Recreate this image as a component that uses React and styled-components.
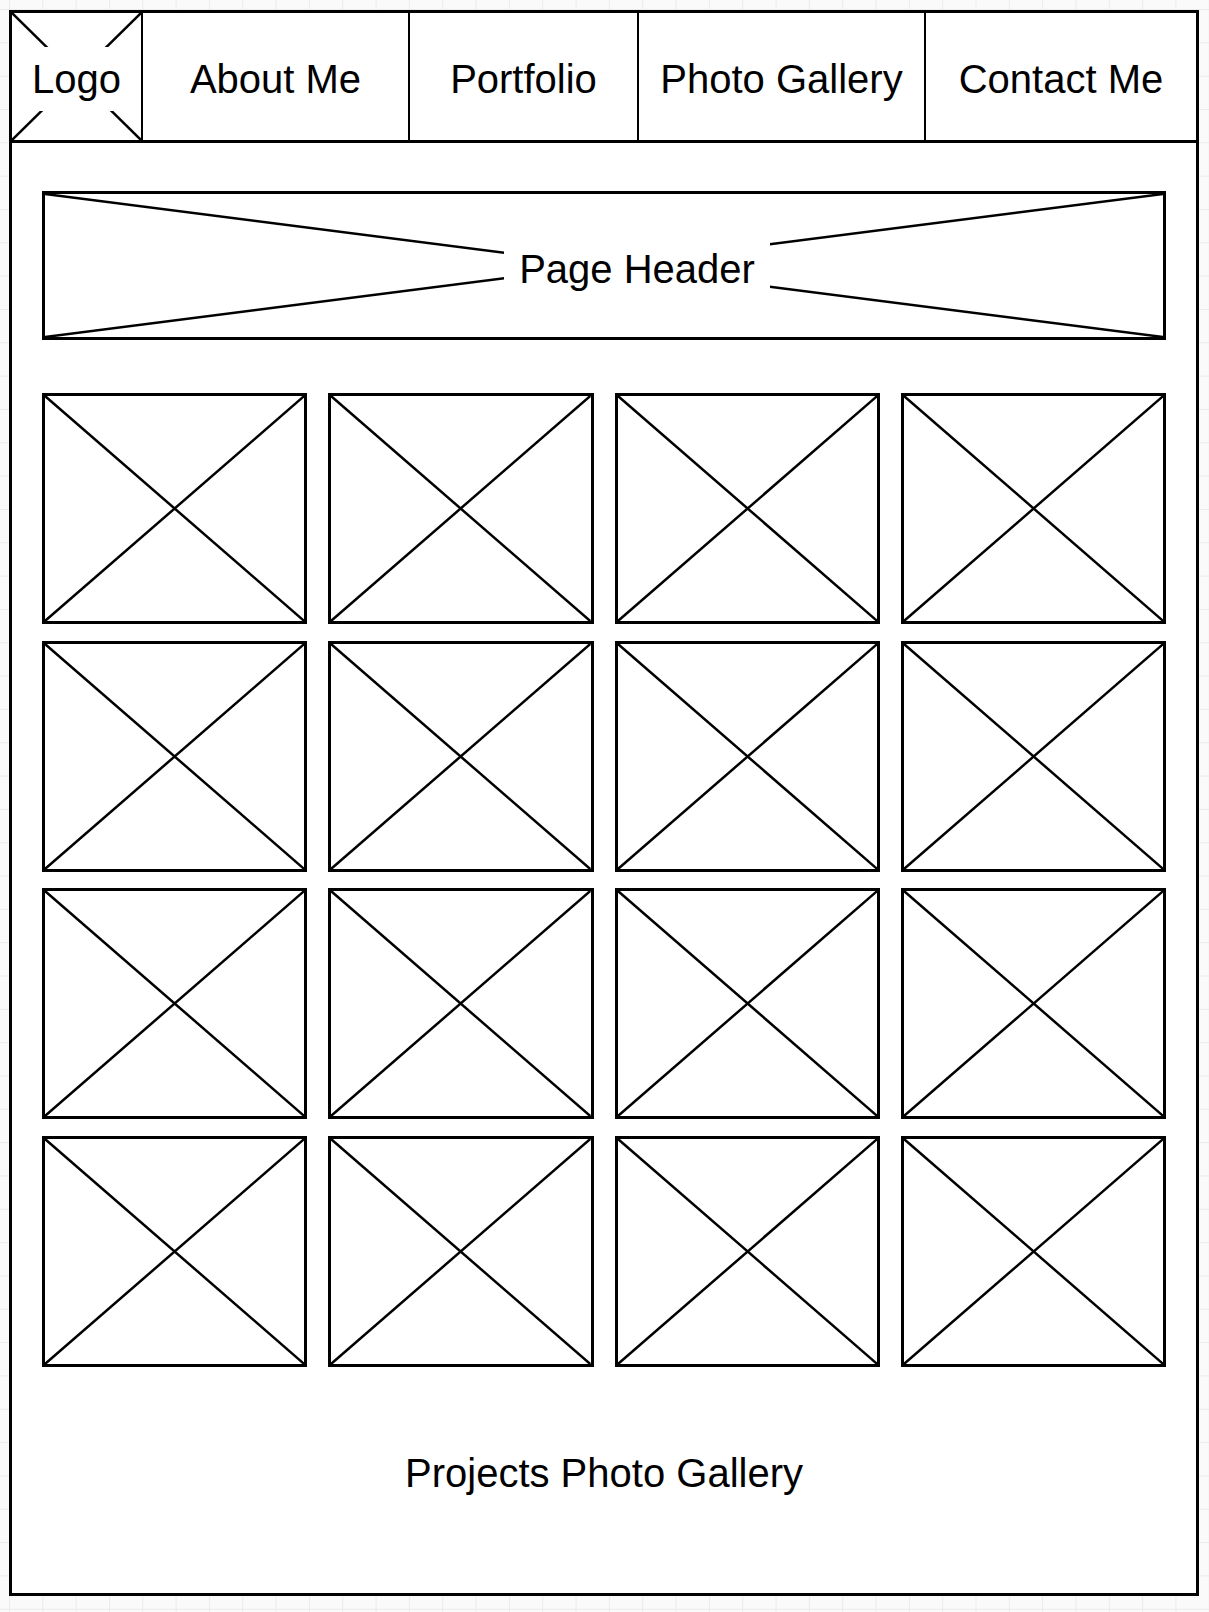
import React from "react";
import styled, { createGlobalStyle } from "styled-components";

const GlobalStyle = createGlobalStyle`
  html, body {
    margin: 0;
    padding: 0;
  }
  body {
    font-family: "Liberation Sans", Arial, Helvetica, sans-serif;
    color: #000;
    background-color: #fafafa;
    background-image:
      linear-gradient(to right, #ebebeb 1px, transparent 1px),
      linear-gradient(to bottom, #ebebeb 1px, transparent 1px);
    background-size: 33.33px 33.33px;
    background-position: 9px 9px;
    min-height: 1612px;
  }
  * { box-sizing: border-box; }
`;

const Frame = styled.div`
  width: 1190px;
  height: 1586px;
  margin: 10px 0 0 9px;
  border: 3px solid #000;
  background: #fff;
  display: flex;
  flex-direction: column;
`;

const Nav = styled.nav`
  display: grid;
  grid-template-columns: 131px 267px 229px 287px 1fr;
  height: 130px;
  border-bottom: 3px solid #000;
`;

const NavCell = styled.div`
  position: relative;
  display: flex;
  align-items: center;
  justify-content: center;
  padding-top: 4px;
  font-size: 40px;
  line-height: 46px;
  white-space: nowrap;
  border-right: ${(p) => (p.$last ? "none" : "2px solid #000")};
  overflow: hidden;
`;

const CrossSvg = styled.svg`
  position: absolute;
  inset: 0;
  width: 100%;
  height: 100%;
  display: block;
`;

const LogoLabel = styled.span`
  position: relative;
  background: #fff;
  line-height: 64px;
  padding: 0 2px;
`;

const Content = styled.main`
  flex: 1;
  display: flex;
  flex-direction: column;
  padding: 48px 30px 0;
`;

const Banner = styled.div`
  position: relative;
  flex: none;
  height: 149px;
  border: 3px solid #000;
  display: flex;
  align-items: center;
  justify-content: center;
  padding-top: 6px;
`;

const BannerLabel = styled.span`
  position: relative;
  background: #fff;
  font-size: 40px;
  line-height: 56px;
  padding: 0 15px;
  margin-left: 66px;
  white-space: nowrap;
`;

const Gallery = styled.div`
  flex: none;
  margin-top: 53px;
  display: grid;
  grid-template-columns: repeat(4, 1fr);
  grid-auto-rows: 231px;
  column-gap: 21px;
  row-gap: 16.5px;
`;

const Tile = styled.div`
  position: relative;
  border: 3px solid #000;
`;

const Caption = styled.p`
  margin: 83px 0 0;
  text-align: center;
  font-size: 40px;
  line-height: 46px;
`;

function Cross() {
  return (
    <CrossSvg viewBox="0 0 100 100" preserveAspectRatio="none" aria-hidden="true">
      <line x1="0" y1="0" x2="100" y2="100" stroke="#000" strokeWidth="2.5" vectorEffect="non-scaling-stroke" />
      <line x1="100" y1="0" x2="0" y2="100" stroke="#000" strokeWidth="2.5" vectorEffect="non-scaling-stroke" />
    </CrossSvg>
  );
}

const navItems = ["About Me", "Portfolio", "Photo Gallery", "Contact Me"];

export default function App() {
  return (
    <>
      <GlobalStyle />
      <Frame>
        <Nav>
          <NavCell>
            <Cross />
            <LogoLabel>Logo</LogoLabel>
          </NavCell>
          {navItems.map((item, i) => (
            <NavCell key={item} $last={i === navItems.length - 1}>
              {item}
            </NavCell>
          ))}
        </Nav>
        <Content>
          <Banner>
            <Cross />
            <BannerLabel>Page Header</BannerLabel>
          </Banner>
          <Gallery>
            {Array.from({ length: 16 }).map((_, i) => (
              <Tile key={i}>
                <Cross />
              </Tile>
            ))}
          </Gallery>
          <Caption>Projects Photo Gallery</Caption>
        </Content>
      </Frame>
    </>
  );
}
